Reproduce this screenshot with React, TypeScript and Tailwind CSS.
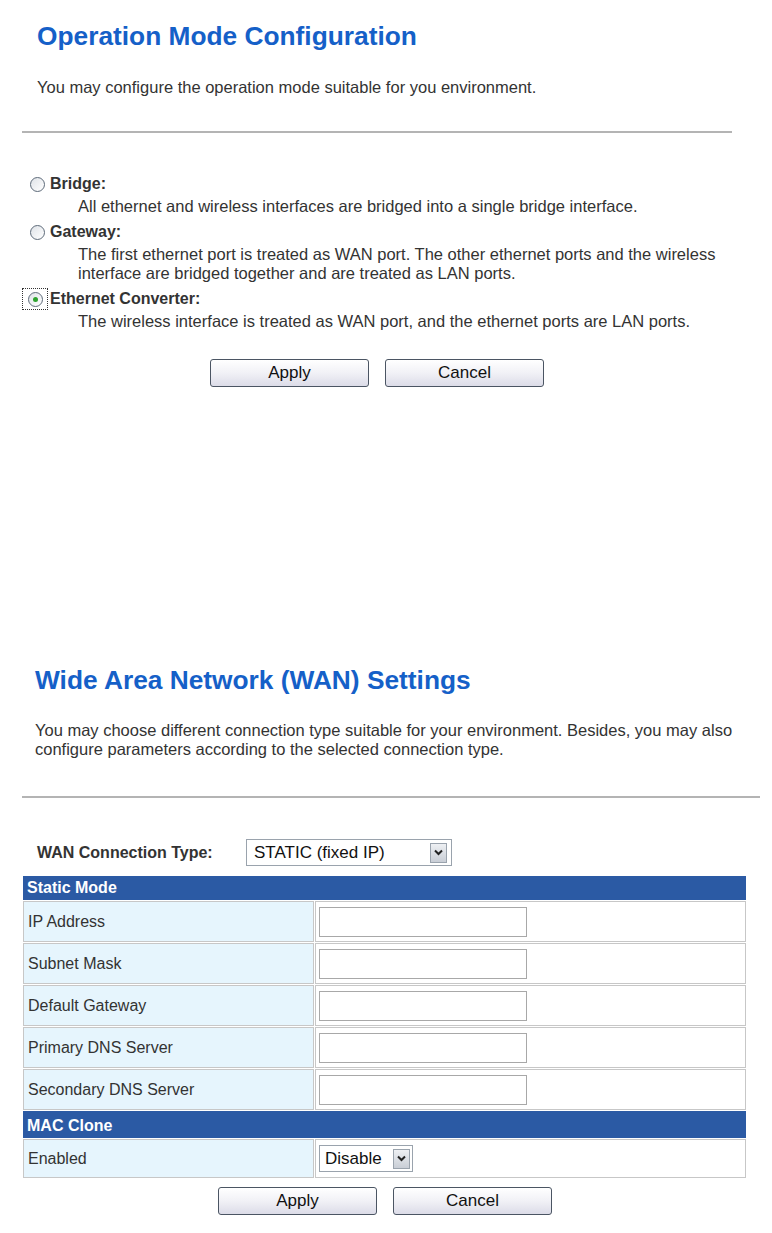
import React from 'react';

const font = { fontFamily: '"Liberation Sans", Arial, sans-serif' };

function Radio({ checked }: { checked?: boolean }) {
  return (
    <span className="relative inline-flex h-[15px] w-[15px] items-center justify-center rounded-full border border-[#5d6a79] bg-gradient-to-br from-[#dfe3e8] to-white">
      {checked && <span className="h-[5px] w-[5px] rounded-full bg-[#2fa32f]" />}
    </span>
  );
}

function Btn({ label }: { label: string }) {
  return (
    <button className="h-[28px] w-[159px] rounded-[3px] border border-[#4b5563] bg-gradient-to-b from-white via-[#f1f1f6] to-[#dcdce8] text-[17px] text-[#111]">
      {label}
    </button>
  );
}

function Chevron() {
  return (
    <span className="flex h-[20px] w-[17px] items-center justify-center border border-[#9aa3ad] bg-gradient-to-b from-[#eef0f3] to-[#c9ced6]">
      <svg width="9" height="7" viewBox="0 0 9 7">
        <path d="M1 1.5 L4.5 5 L8 1.5" fill="none" stroke="#222" strokeWidth="2" />
      </svg>
    </span>
  );
}

const MODES = [
  { name: 'Bridge:', lines: ['All ethernet and wireless interfaces are bridged into a single bridge interface.'] },
  {
    name: 'Gateway:',
    lines: [
      'The first ethernet port is treated as WAN port. The other ethernet ports and the wireless',
      'interface are bridged together and are treated as LAN ports.',
    ],
  },
  {
    name: 'Ethernet Converter:',
    lines: ['The wireless interface is treated as WAN port, and the ethernet ports are LAN ports.'],
    checked: true,
  },
];

const FIELDS = ['IP Address', 'Subnet Mask', 'Default Gateway', 'Primary DNS Server', 'Secondary DNS Server'];

export default function App() {
  return (
    <div className="min-h-[1233px] w-[772px] bg-white text-[#333]" style={font}>
      {/* Operation mode */}
      <div className="pt-[20px]">
        <h1 className="pl-[37px] text-[26.3px] font-bold leading-[32px] text-[#1560c8]">Operation Mode Configuration</h1>
        <p className="mt-[25px] pl-[37px] text-[16.5px] leading-[20px] text-[#333]">
          You may configure the operation mode suitable for you environment.
        </p>
        <div className="ml-[22px] mt-[34px] h-[2px] w-[710px] bg-[#b4b4b4]" />

        <div className="mt-[41px] pl-[30px]">
          {MODES.map((m, i) => (
            <div key={m.name} className={i > 0 ? 'mt-[6px]' : ''}>
              <div className="flex h-[20px] items-center">
                {m.checked ? (
                  <span className="-ml-[8px] flex h-[22px] w-[26px] items-center justify-center border border-dotted border-[#333]">
                    <Radio checked />
                  </span>
                ) : (
                  <Radio />
                )}
                <span className={`text-[16px] font-bold text-[#333] ${m.checked ? 'ml-[2px]' : 'ml-[5px]'}`}>{m.name}</span>
              </div>
              <div className="mt-[3px] pl-[48px] text-[16.5px] leading-[19px] text-[#333]">
                {m.lines.map((l) => (
                  <div key={l}>{l}</div>
                ))}
              </div>
            </div>
          ))}
        </div>

        <div className="mt-[28px] flex gap-[16px] pl-[210px]">
          <Btn label="Apply" />
          <Btn label="Cancel" />
        </div>
      </div>

      {/* WAN settings */}
      <div className="mt-[277px]">
        <h1 className="pl-[35px] text-[26.3px] font-bold leading-[32px] text-[#1560c8]">Wide Area Network (WAN) Settings</h1>
        <p className="mt-[25px] pl-[35px] pr-[10px] text-[16.5px] leading-[19px] text-[#333]">
          You may choose different connection type suitable for your environment. Besides, you may also
          <br />
          configure parameters according to the selected connection type.
        </p>
        <div className="ml-[22px] mt-[37px] h-[2px] w-[738px] bg-[#b4b4b4]" />

        <div className="mt-[41px] flex h-[27px] items-center">
          <span className="w-[246px] pl-[37px] text-[16px] font-bold text-[#333]">WAN Connection Type:</span>
          <div className="flex h-[27px] w-[206px] items-center justify-between border border-[#9aa3ad] pl-[7px] pr-[4px]">
            <span className="text-[17px] text-[#111]">STATIC (fixed IP)</span>
            <Chevron />
          </div>
        </div>

        <table className="ml-[22px] mt-[9px] w-[725px] border-separate border-spacing-[1px] text-[16px]">
          <tbody>
            <tr>
              <td colSpan={2} className="h-[22px] bg-[#2b5aa4] pl-[4px] font-bold text-white">
                Static Mode
              </td>
            </tr>
            {FIELDS.map((f) => (
              <tr key={f}>
                <td className="h-[41px] w-[291px] border border-[#c7c7c7] bg-[#e6f5fd] pl-[4px] text-[#333]">{f}</td>
                <td className="border border-[#c7c7c7] pl-[3px]">
                  <div className="h-[30px] w-[208px] border border-[#a8a8a8] bg-white" />
                </td>
              </tr>
            ))}
            <tr>
              <td colSpan={2} className="h-[27px] bg-[#2b5aa4] pl-[4px] pt-[2px] font-bold text-white">
                MAC Clone
              </td>
            </tr>
            <tr>
              <td className="h-[39px] border border-[#c7c7c7] bg-[#e6f5fd] pl-[4px] text-[#333]">Enabled</td>
              <td className="border border-[#c7c7c7] pl-[3px]">
                <div className="flex h-[27px] w-[94px] items-center justify-between border border-[#9aa3ad] pl-[5px] pr-[2px]">
                  <span className="text-[17px] text-[#111]">Disable</span>
                  <Chevron />
                </div>
              </td>
            </tr>
          </tbody>
        </table>

        <div className="mt-[8px] flex gap-[16px] pl-[218px]">
          <Btn label="Apply" />
          <Btn label="Cancel" />
        </div>
      </div>
    </div>
  );
}
